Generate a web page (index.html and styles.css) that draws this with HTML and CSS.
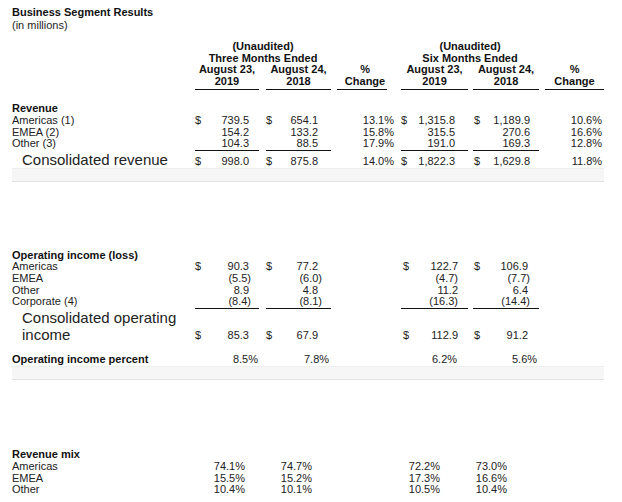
FILE: index.html
```html
<!DOCTYPE html>
<html lang="en">
<head>
<meta charset="utf-8">
<title>Business Segment Results</title>
<link rel="stylesheet" href="styles.css">
</head>
<body>
<div class="page">
  <div class="title">
    <div class="t-main">Business Segment Results</div>
    <div class="t-sub">(in millions)</div>
  </div>
  <table class="seg">
    <colgroup>
      <col class="w-l"><col class="w-c1"><col class="w-g1"><col class="w-c2"><col class="w-g2"><col class="w-p1"><col class="w-c4"><col class="w-g3"><col class="w-c5"><col class="w-g4"><col class="w-p2">
    </colgroup>
    <thead>
      <tr>
        <th></th>
        <th colspan="3">(Unaudited)<br>Three Months Ended</th>
        <th></th><th></th>
        <th colspan="3">(Unaudited)<br>Six Months Ended</th>
        <th></th><th></th>
      </tr>
      <tr>
        <th></th>
        <th><div class="hu">August 23,<br>2019</div></th>
        <th></th>
        <th><div class="hu">August 24,<br>2018</div></th>
        <th></th>
        <th><div class="hu hp1">%<br>Change</div></th>
        <th><div class="hu">August 23,<br>2019</div></th>
        <th></th>
        <th><div class="hu">August 24,<br>2018</div></th>
        <th></th>
        <th><div class="hu">%<br>Change</div></th>
      </tr>
    </thead>
    <tbody class="rev">
      <tr class="gap"><td colspan="11"><div class="g13"></div></td></tr>
      <tr><td class="lb">Revenue</td><td colspan="10"></td></tr>
      <tr>
        <td>Americas (1)</td>
        <td class="c1"><span class="cur">$</span>739.5</td><td></td>
        <td class="c2"><span class="cur">$</span>654.1</td><td></td>
        <td class="p1">13.1%</td>
        <td class="c4"><span class="cur">$</span>1,315.8</td><td></td>
        <td class="c5"><span class="cur">$</span>1,189.9</td><td></td>
        <td class="p2">10.6%</td>
      </tr>
      <tr>
        <td>EMEA (2)</td>
        <td class="c1">154.2</td><td></td>
        <td class="c2">133.2</td><td></td>
        <td class="p1">15.8%</td>
        <td class="c4">315.5</td><td></td>
        <td class="c5">270.6</td><td></td>
        <td class="p2">16.6%</td>
      </tr>
      <tr class="ul">
        <td>Other (3)</td>
        <td class="c1">104.3</td><td></td>
        <td class="c2">88.5</td><td></td>
        <td class="p1">17.9%</td>
        <td class="c4">191.0</td><td></td>
        <td class="c5">169.3</td><td></td>
        <td class="p2">12.8%</td>
      </tr>
      <tr class="tot">
        <td class="big">Consolidated revenue</td>
        <td class="c1"><span class="cur">$</span>998.0</td><td></td>
        <td class="c2"><span class="cur">$</span>875.8</td><td></td>
        <td class="p1">14.0%</td>
        <td class="c4"><span class="cur">$</span>1,822.3</td><td></td>
        <td class="c5"><span class="cur">$</span>1,629.8</td><td></td>
        <td class="p2">11.8%</td>
      </tr>
      <tr class="gap"><td colspan="11"><div class="bar"></div></td></tr>
    </tbody>
    <tbody class="op">
      <tr class="gap"><td colspan="11"><div class="g68"></div></td></tr>
      <tr><td class="lb">Operating income (loss)</td><td colspan="10"></td></tr>
      <tr>
        <td>Americas</td>
        <td class="c1"><span class="cur">$</span>90.3</td><td></td>
        <td class="c2"><span class="cur">$</span>77.2</td><td></td>
        <td class="p1"></td>
        <td class="c4"><span class="cur">$</span>122.7</td><td></td>
        <td class="c5"><span class="cur">$</span>106.9</td><td></td>
        <td class="p2"></td>
      </tr>
      <tr>
        <td>EMEA</td>
        <td class="c1"><span class="ng">(5.5)</span></td><td></td>
        <td class="c2"><span class="ng">(6.0)</span></td><td></td>
        <td class="p1"></td>
        <td class="c4"><span class="ng">(4.7)</span></td><td></td>
        <td class="c5"><span class="ng">(7.7)</span></td><td></td>
        <td class="p2"></td>
      </tr>
      <tr>
        <td>Other</td>
        <td class="c1">8.9</td><td></td>
        <td class="c2">4.8</td><td></td>
        <td class="p1"></td>
        <td class="c4">11.2</td><td></td>
        <td class="c5">6.4</td><td></td>
        <td class="p2"></td>
      </tr>
      <tr class="ul">
        <td>Corporate (4)</td>
        <td class="c1"><span class="ng">(8.4)</span></td><td></td>
        <td class="c2"><span class="ng">(8.1)</span></td><td></td>
        <td class="p1"></td>
        <td class="c4"><span class="ng">(16.3)</span></td><td></td>
        <td class="c5"><span class="ng">(14.4)</span></td><td></td>
        <td class="p2"></td>
      </tr>
      <tr class="tot tot2">
        <td class="big">Consolidated operating income</td>
        <td class="c1"><span class="cur">$</span>85.3</td><td></td>
        <td class="c2"><span class="cur">$</span>67.9</td><td></td>
        <td class="p1"></td>
        <td class="c4"><span class="cur">$</span>112.9</td><td></td>
        <td class="c5"><span class="cur">$</span>91.2</td><td></td>
        <td class="p2"></td>
      </tr>
      <tr class="gap"><td colspan="11"><div class="g11"></div></td></tr>
      <tr class="pct">
        <td class="lb">Operating income percent</td>
        <td class="c1">8.5%</td><td></td>
        <td class="c2">7.8%</td><td></td>
        <td class="p1"></td>
        <td class="c4">6.2%</td><td></td>
        <td class="c5">5.6%</td><td></td>
        <td class="p2"></td>
      </tr>
      <tr class="gap"><td colspan="11"><div class="g1"></div><div class="bar"></div></td></tr>
    </tbody>
    <tbody class="mix">
      <tr class="gap"><td colspan="11"><div class="g69"></div></td></tr>
      <tr><td class="lb">Revenue mix</td><td colspan="10"></td></tr>
      <tr>
        <td>Americas</td>
        <td class="c1">74.1%</td><td></td>
        <td class="c2">74.7%</td><td></td>
        <td class="p1"></td>
        <td class="c4">72.2%</td><td></td>
        <td class="c5">73.0%</td><td></td>
        <td class="p2"></td>
      </tr>
      <tr>
        <td>EMEA</td>
        <td class="c1">15.5%</td><td></td>
        <td class="c2">15.2%</td><td></td>
        <td class="p1"></td>
        <td class="c4">17.3%</td><td></td>
        <td class="c5">16.6%</td><td></td>
        <td class="p2"></td>
      </tr>
      <tr>
        <td>Other</td>
        <td class="c1">10.4%</td><td></td>
        <td class="c2">10.1%</td><td></td>
        <td class="p1"></td>
        <td class="c4">10.5%</td><td></td>
        <td class="c5">10.4%</td><td></td>
        <td class="p2"></td>
      </tr>
    </tbody>
  </table>
</div>
</body>
</html>
```

FILE: styles.css
```css
html, body {
  margin: 0;
  padding: 0;
  background: #ffffff;
}

body {
  font-family: "Liberation Sans", Arial, Helvetica, sans-serif;
  font-size: 11px;
  color: #222222;
}

.page {
  padding: 6px 12px 0 12px;
}

.title {
  line-height: 12.5px;
  margin-bottom: 10px;
}

.t-main {
  font-weight: bold;
  color: #111111;
}

.seg {
  border-collapse: separate;
  border-spacing: 0;
  table-layout: fixed;
  width: 592px;
  font-size: 11px;
  line-height: 11.6px;
  color: #222222;
}

.w-l { width: 183px; }
.w-c1 { width: 64px; }
.w-g1 { width: 7px; }
.w-c2 { width: 65px; }
.w-g2 { width: 6px; }
.w-p1 { width: 64px; }
.w-c4 { width: 67px; }
.w-g3 { width: 5px; }
.w-c5 { width: 66px; }
.w-g4 { width: 6px; }
.w-p2 { width: 59px; }

.seg th {
  padding: 0;
  font-weight: bold;
  text-align: center;
  vertical-align: bottom;
  color: #111111;
  white-space: nowrap;
}

.hu {
  border-bottom: 1px solid #111111;
  padding-bottom: 2px;
}

.hp1 {
  margin-right: 14px;
  padding-left: 6px;
}

.seg td {
  padding: 0;
  vertical-align: baseline;
}

.lb {
  font-weight: bold;
  color: #111111;
  white-space: nowrap;
}

.c1, .c2, .c4, .c5, .p1, .p2 {
  text-align: right;
  white-space: nowrap;
}

.cur {
  float: left;
}

.ng {
  display: inline-block;
}

/* underline under last item of a group */
.ul td.c1, .ul td.c2, .ul td.c4, .ul td.c5 {
  border-bottom: 1px solid #111111;
}

/* totals */
.tot .big {
  font-size: 15px;
  line-height: 17px;
  padding-left: 10px;
  color: #222222;
}

.tot2 td {
  vertical-align: bottom;
}

.tot2 td.c1, .tot2 td.c2, .tot2 td.c4, .tot2 td.c5 {
  padding-bottom: 1px;
}

/* spacers and bands */
.gap td { padding: 0; }
.g1 { height: 1px; }
.g11 { height: 11px; }
.g13 { height: 13px; }
.g68 { height: 68px; }
.g69 { height: 69px; }

.bar {
  height: 12px;
  background: #f6f6f6;
  border-top: 1px solid #eeeeee;
  border-bottom: 1px solid #e2e2e2;
}

/* revenue section */
.rev .c1 { padding-right: 10px; }
.rev .c2 { padding-right: 13px; }
.rev .p1 { padding-right: 7px; }
.rev .c4 { padding-right: 13px; }
.rev .c5 { padding-left: 1px; padding-right: 9px; }
.rev .p2 { padding-right: 2px; }

/* operating income section */
.op .c1 { padding-right: 10px; }
.op .c2 { padding-right: 13px; }
.op .c4 { padding-left: 2px; padding-right: 10px; }
.op .c5 { padding-left: 1px; padding-right: 11px; }
.op .c1 .ng { margin-right: -2px; }
.op .c2 .ng { margin-right: -4px; }
.op .c5 .ng { margin-right: -2px; }

.op .pct .c1 { padding-right: 1px; }
.op .pct .c2 { padding-right: 2px; }
.op .pct .c4 { padding-right: 11px; }
.op .pct .c5 { padding-right: 2px; }

/* revenue mix section */
.mix .c1 { padding-right: 14px; }
.mix .c2 { padding-right: 19px; }
.mix .c4 { padding-right: 28px; }
.mix .c5 { padding-right: 32px; }
```
